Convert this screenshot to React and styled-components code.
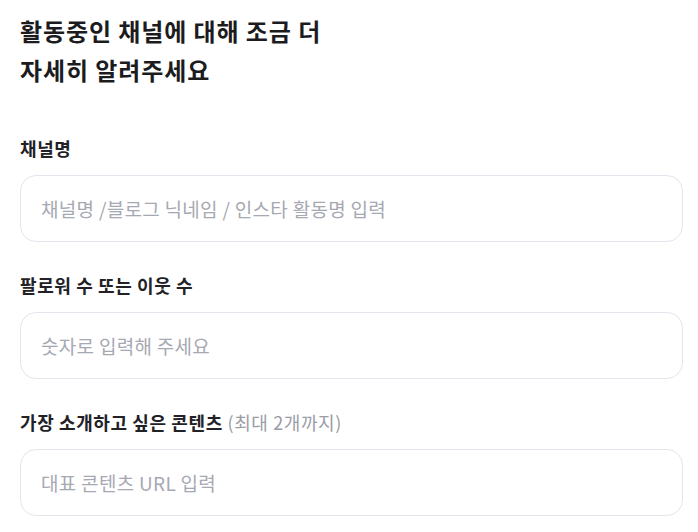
import React from "react";
import styled, { createGlobalStyle } from "styled-components";

const GlobalStyle = createGlobalStyle`
  body {
    margin: 0;
    background: #ffffff;
    font-family: "Noto Sans CJK KR", "Noto Sans", sans-serif;
  }
`;

const Page = styled.div`
  padding: 11px 15px 0 20px;
`;

const Title = styled.h2`
  margin: 0 0 47px;
  font-size: 24px;
  font-weight: 700;
  line-height: 39px;
  color: #1c1c1e;
  letter-spacing: 0.9px;
`;

const Field = styled.div`
  display: flex;
  flex-direction: column;
  gap: 15px;
  margin-bottom: 31px;
`;

const Label = styled.label`
  font-size: 18px;
  font-weight: 700;
  line-height: 24px;
  color: #222226;
  letter-spacing: 0.6px;
`;

const Hint = styled.span`
  font-weight: 400;
  color: #9a9ca6;
`;

const Input = styled.input`
  box-sizing: border-box;
  width: 100%;
  height: 67px;
  padding: 0 20px;
  border: 1px solid #e3e5ec;
  border-radius: 16px;
  background: #fff;
  font-family: inherit;
  font-size: 19px;
  color: #222;
  letter-spacing: 0.3px;
  outline: none;

  &::placeholder {
    color: #a6a8b2;
  }
`;

const fields = [
  { label: "채널명", placeholder: "채널명 /블로그 닉네임 / 인스타 활동명 입력" },
  { label: "팔로워 수 또는 이웃 수", placeholder: "숫자로 입력해 주세요" },
  { label: "가장 소개하고 싶은 콘텐츠", hint: "(최대 2개까지)", placeholder: "대표 콘텐츠 URL 입력" },
];

const App = () => {
  return (
    <Page>
      <GlobalStyle />
      <Title>
        활동중인 채널에 대해 조금 더
        <br />
        자세히 알려주세요
      </Title>
      {fields.map(f => (
        <Field key={f.label}>
          <Label>
            {f.label} {f.hint && <Hint>{f.hint}</Hint>}
          </Label>
          <Input placeholder={f.placeholder} />
        </Field>
      ))}
    </Page>
  );
};

export default App;
